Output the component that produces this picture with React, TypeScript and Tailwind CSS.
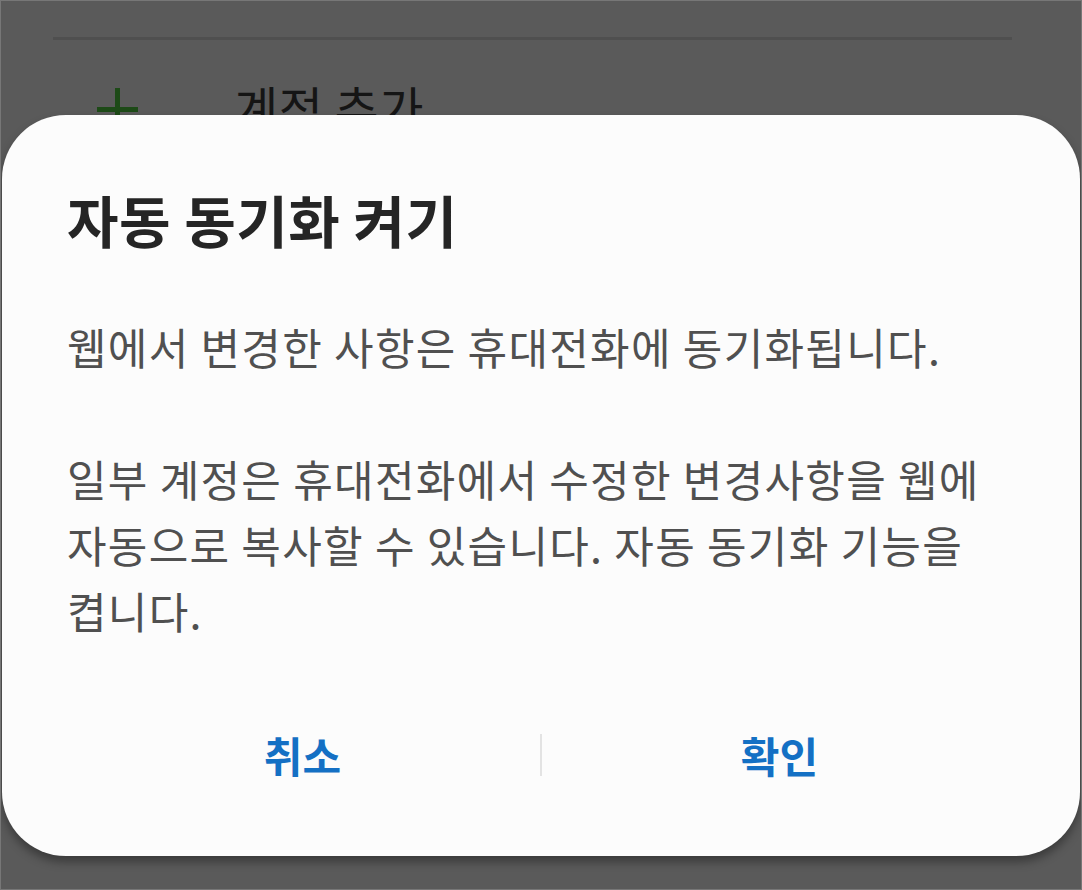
import React from "react";

export default function App() {
  const font = { fontFamily: '"Noto Sans CJK KR", "Noto Sans", sans-serif' };
  return (
    <div
      className="relative w-[1082px] h-[890px] overflow-hidden bg-[#5a5a5a] border border-[#777777]"
      style={font}
    >
      {/* background list (dimmed) */}
      <div className="pt-[36px] pl-[52px] pr-[69px]">
        <div className="h-[3px] bg-[#4f4f4f]" />
      </div>
      <div className="flex items-start pl-[96px] pt-[48px]">
        <div className="relative w-[41px] h-[41px]">
          <div className="absolute left-[18px] top-0 w-[5px] h-[41px] bg-[#1d4a17]" />
          <div className="absolute left-0 top-[19px] w-[41px] h-[5px] bg-[#1d4a17]" />
        </div>
        <div className="ml-[96px] -mt-[10px] text-[48px] leading-[56px] text-[#151515] tracking-[0.5px]">
          계정 추가
        </div>
      </div>

      {/* overlay dialog */}
      <div className="absolute left-[1px] top-[114px] w-[1078px] h-[741px] bg-[#fcfcfc] rounded-[64px] shadow-[0_6px_10px_rgba(0,0,0,0.35)] flex flex-col">
        <div className="pt-[68px] pl-[65px] pr-[40px]">
          <div className="text-[56px] leading-[72px] font-bold text-[#252525] tracking-[0.5px]">
            자동 동기화 켜기
          </div>
          <div className="mt-[58px] text-[43px] leading-[66px] text-[#505050] tracking-[1.3px] whitespace-nowrap">
            웹에서 변경한 사항은 휴대전화에 동기화됩니다.
          </div>
          <div className="mt-[66px] text-[43px] leading-[66px] text-[#505050] tracking-[1.3px] whitespace-nowrap">
            <div>일부 계정은 휴대전화에서 수정한 변경사항을 웹에</div>
            <div>자동으로 복사할 수 있습니다. 자동 동기화 기능을</div>
            <div>켭니다.</div>
          </div>
        </div>
        <div className="mt-[86px] mx-[63px] flex items-center">
          <div className="flex-1 text-center text-[42px] leading-[52px] font-bold text-[#1470c4]">
            취소
          </div>
          <div className="w-[2px] h-[42px] bg-[#e3e3e3]" />
          <div className="flex-1 text-center text-[42px] leading-[52px] font-bold text-[#1470c4]">
            확인
          </div>
        </div>
      </div>
    </div>
  );
}
